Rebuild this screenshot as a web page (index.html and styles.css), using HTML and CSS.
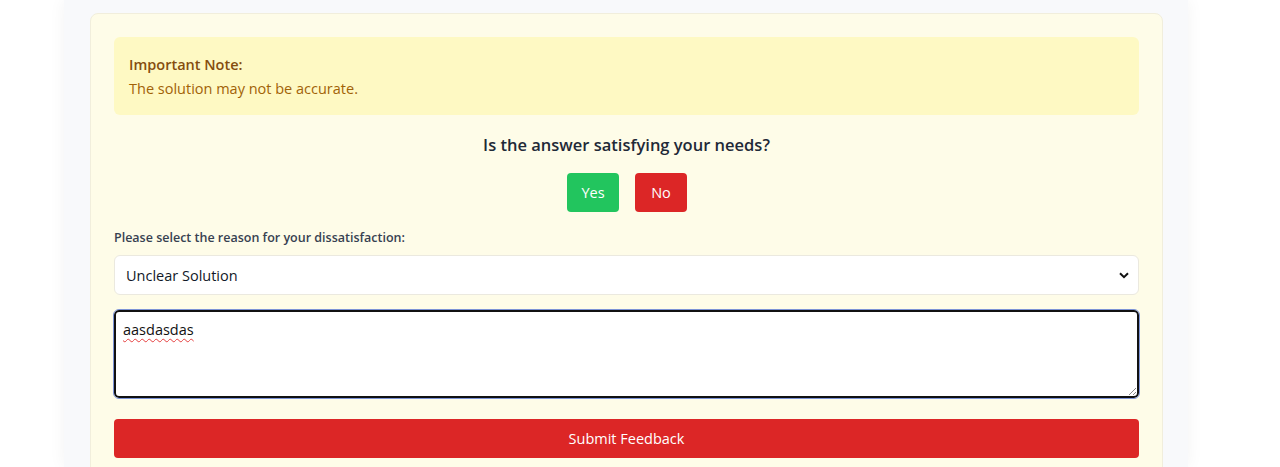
FILE: index.html
```html
<!DOCTYPE html>
<html lang="en">
<head>
<meta charset="utf-8">
<title>Feedback</title>
<link rel="stylesheet" href="styles.css">
</head>
<body>
<div class="page">
  <div class="panel">
    <div class="card">
      <div class="note">
        <div class="note-title">Important Note:</div>
        <div class="note-text">The solution may not be accurate.</div>
      </div>
      <h2 class="question">Is the answer satisfying your needs?</h2>
      <div class="choices">
        <button class="btn btn-yes">Yes</button>
        <button class="btn btn-no">No</button>
      </div>
      <label class="label">Please select the reason for your dissatisfaction:</label>
      <div class="select">
        <span>Unclear Solution</span>
        <svg class="chev" width="10" height="7" viewBox="0 0 10 7"><path d="M1 1.2 L5 5.2 L9 1.2" fill="none" stroke="#111" stroke-width="2"/></svg>
      </div>
      <div class="textarea" role="textbox"><span class="typo">aasdasdas</span>
        <svg class="grip" width="8" height="8" viewBox="0 0 8 8"><path d="M8 1 L1 8 M8 5 L5 8" stroke="#888" stroke-width="1"/></svg>
      </div>
      <button class="submit">Submit Feedback</button>
    </div>
  </div>
</div>
</body>
</html>
```

FILE: styles.css
```css
* { box-sizing: border-box; }
html, body { margin: 0; padding: 0; background: #ffffff; }
body {
  font-family: "Open Sans", "Noto Sans", "Liberation Sans", sans-serif;
  height: 467px;
  overflow: hidden;
}
.page { padding-left: 64px; }
.panel {
  width: 1124px;
  background: #f8f9fb;
  box-shadow: 0 0 16px rgba(0,0,0,0.05);
  padding: 13px 25px 0 26px;
  height: 467px;
}
.card {
  background: #fefce8;
  border: 1px solid #f1eedc;
  border-radius: 8px;
  padding: 23px 23px 24px 23px;
  display: flex;
  flex-direction: column;
}
.note {
  background: #fef9c3;
  border-radius: 6px;
  padding: 16px 15px 14px;
  font-size: 14.5px;
  line-height: 24px;
}
.note-title { color: #854d0e; font-weight: 600; }
.note-text { color: #a16207; }
.question {
  margin: 17px 0 0;
  text-align: center;
  font-size: 16.5px;
  line-height: 26px;
  font-weight: 600;
  color: #1f2937;
}
.choices {
  display: flex;
  justify-content: center;
  gap: 16px;
  margin-top: 15px;
}
.btn {
  width: 52px;
  height: 39px;
  border: none;
  border-radius: 4px;
  color: #fff;
  font-family: inherit;
  font-size: 14.5px;
}
.btn-yes { background: #22c55e; margin-left: 1px; }
.btn-no { background: #dc2626; }
.label {
  margin-top: 17px;
  font-size: 12.5px;
  font-weight: 600;
  color: #374151;
  line-height: 17px;
}
.select {
  margin-top: 9px;
  height: 40px;
  background: #fff;
  border: 1px solid #ebe9df;
  border-radius: 6px;
  display: flex;
  align-items: center;
  justify-content: space-between;
  padding: 0 9px 0 11px;
  font-size: 14.5px;
  color: #111827;
}
.textarea {
  position: relative;
  margin-top: 15px;
  height: 88px;
  background: #fff;
  border: 2px solid #111;
  border-radius: 5px;
  outline: 1px solid #7c93d6;
  outline-offset: 0;
  padding: 8px 7px;
  font-size: 14.5px;
  line-height: 20px;
  color: #111;
}
.typo {
  text-decoration: underline wavy #e53e3e;
  text-decoration-thickness: 1px;
  text-underline-offset: 3px;
}
.grip { position: absolute; right: 1px; bottom: 1px; }
.submit {
  margin-top: 21px;
  height: 39px;
  background: #dc2626;
  color: #fff;
  border: none;
  border-radius: 4px;
  font-family: inherit;
  font-size: 14.5px;
}
```
